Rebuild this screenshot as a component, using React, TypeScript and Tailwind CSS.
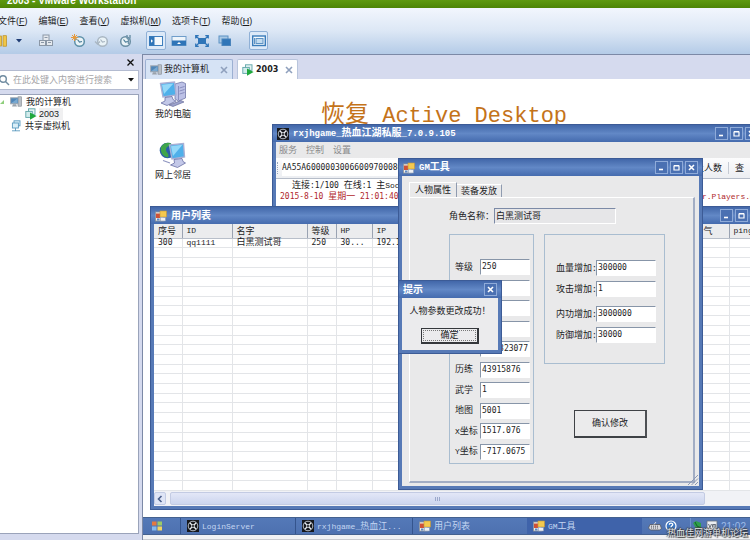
import React from "react";
import { clsx } from "clsx";

function Lat({ children, className }: { children: React.ReactNode; className?: string }) {
  return <span className={clsx("font-['Liberation_Mono','Noto_Sans_CJK_SC',monospace]", className ?? "text-[8px]")}>{children}</span>;
}

function Num({ children }: { children: React.ReactNode }) {
  return <span className="font-['DejaVu_Sans_Mono','Noto_Sans_CJK_SC',monospace] text-[8px]">{children}</span>;
}

function FormIcon() {
  return (
    <svg viewBox="0 0 12 12" className="size-3 shrink-0" aria-hidden="true">
      <rect x="0.5" y="2" width="8" height="9" fill="#f3f0e6" stroke="#8d939c" strokeWidth="0.8" />
      <rect x="1" y="3.5" width="4" height="4.500" fill="#cf5138" />
      <rect x="5" y="1" width="6.500" height="6" fill="#f4c94f" stroke="#c3973a" strokeWidth="0.6" />
      <rect x="5.500" y="7.500" width="5" height="3.500" fill="#eef0f4" stroke="#8b9bb5" strokeWidth="0.6" />
      <rect x="2" y="8.500" width="2.500" height="2" fill="#5d88c8" />
    </svg>
  );
}

function ReelIcon() {
  return (
    <svg viewBox="0 0 12 12" className="size-3 shrink-0" aria-hidden="true">
      <rect width="12" height="12" fill="#16181c" />
      <circle cx="6" cy="6" r="4.8" fill="none" stroke="#c3cad2" strokeWidth="0.9" />
      <path d="M2.8 2.8 9.2 9.2M9.2 2.8 2.8 9.2" stroke="#e8ecf0" strokeWidth="1.300" />
      <circle cx="6" cy="6" r="1.500" fill="#16181c" stroke="#e8ecf0" strokeWidth="0.7" />
    </svg>
  );
}

function PcIcon() {
  return (
    <svg viewBox="0 0 12 12" className="size-3 shrink-0" aria-hidden="true">
      <rect x="8" y="0.8" width="3.5" height="9.4" fill="#b9bfc6" stroke="#7f868e" strokeWidth="0.6" />
      <rect x="0.6" y="1.8" width="7.8" height="6" fill="#4f86b8" stroke="#a4abb3" strokeWidth="1" />
      <path d="M1.5 7 7.5 2.5V7z" fill="#79a9d1" />
      <path d="M3 8.3h3l1 2.2H2z" fill="#9aa2ab" />
    </svg>
  );
}

function VmIcon() {
  return (
    <svg viewBox="0 0 12 12" className="size-3 shrink-0" aria-hidden="true">
      <rect x="3.5" y="0.8" width="6.5" height="5.5" fill="#e3f3f2" stroke="#5fa5a8" strokeWidth="0.9" />
      <rect x="0.8" y="3.4" width="6.5" height="6" fill="#d2ecec" stroke="#5fa5a8" strokeWidth="0.9" />
      <path d="M5 4.4 11.6 8 5 11.8z" fill="#1fa83c" />
    </svg>
  );
}

function SharedIcon() {
  return (
    <svg viewBox="0 0 12 12" className="size-3 shrink-0" fill="#d9eef7" stroke="#5b9bc0" strokeWidth="0.9" aria-hidden="true">
      <rect x="4" y="0.8" width="6" height="5" />
      <rect x="2.4" y="3" width="6" height="5" />
      <path d="M5.5 8v3M2 10.8h8" />
    </svg>
  );
}

function TowerPc() {
  return (
    <svg viewBox="0 0 27 26" className="h-[26px] w-[27px]" aria-hidden="true">
      <path d="M16 3l7-2 3.500 1.500V17l-7 3-3.500-2z" fill="#bcc1e6" stroke="#7278a8" strokeWidth="0.8" />
      <path d="M19.500 5v14M20.500 7l5-1.500M20.500 10l5-1.500M20.500 13l5-1.500" stroke="#7c82b4" strokeWidth="0.8" />
      <path d="M1.500 2.500 15.500 1l1.500 13L4 16z" fill="#4fb0ea" stroke="#a9afd4" strokeWidth="1.400" />
      <path d="M3 3.700 14.500 2.400 5 13z" fill="#94d8f8" />
      <path d="M6 16.500l7-1 1 3 3 1.500-9 4.500-6-2.500 4-2z" fill="#c3c8e8" stroke="#6a70a4" strokeWidth="0.8" />
      <path d="M10 24l12-4.500 3 1.500-11 4.500z" fill="#9da3cc" stroke="#5a6090" strokeWidth="0.6" />
    </svg>
  );
}

function GlobePc() {
  return (
    <svg viewBox="0 0 27 26" className="h-[26px] w-[27px]" aria-hidden="true">
      <circle cx="8.500" cy="8.500" r="7.800" fill="#2a5fa8" />
      <path d="M2 5c3-5 9-4.500 10-3.500 0 3-5 2.500-5 6s4 4 2 8c-5-1-8-5-7-10.500z" fill="#3fa54a" />
      <path d="M10.500 3 24.500 1.500 25.500 15 13 17z" fill="#4fb0ea" stroke="#a9afd4" strokeWidth="1.400" />
      <path d="M12 4.200 23.500 2.800 14 14z" fill="#94d8f8" />
      <path d="M15 17.500l8-1 1 3 2.500 1.500-8 4.500-7-2.500 4-2z" fill="#c3c8e8" stroke="#6a70a4" strokeWidth="0.8" />
      <path d="M4 18.500l7 2.500" stroke="#8f95c0" strokeWidth="1.200" />
    </svg>
  );
}

function WinButton({ kind }: { kind: "min" | "max" | "close" }) {
  const name = { min: "最小化", max: "最大化", close: "关闭" }[kind];
  return (
    <button aria-label={name} className="flex size-[13px] items-center justify-center border border-[#8fabd9] bg-[#4a70b2]">
      <svg viewBox="0 0 9 9" className="size-[9px]" stroke="#fff" fill="none" aria-hidden="true">
        {kind === "min" && <path d="M2 6.500h4" strokeWidth="1.600" />}
        {kind === "max" && <path d="M2 3h5v4H2zM2 2.500h5" strokeWidth="1.200" />}
        {kind === "close" && <path d="M2 2l5 5M7 2 2 7" strokeWidth="1.600" />}
      </svg>
    </button>
  );
}

function Win({ className, title, icon, buttons, children }: {
  className: string; title: React.ReactNode; icon?: React.ReactNode; buttons: ("min" | "max" | "close")[]; children: React.ReactNode;
}) {
  return (
    <section className={clsx("absolute flex flex-col border border-[#3c5b96] bg-[#5679b6]", className)}>
      <header className="flex h-[17px] shrink-0 items-center gap-1 bg-linear-to-b from-[#4267a9] via-[#6288c6] to-[#456bae] px-1 text-[10px] leading-[16px] font-bold text-white">
        {icon}
        <h2 className="whitespace-nowrap">{title}</h2>
        <div className="ml-auto flex gap-[2px]">{buttons.map((b) => <WinButton key={b} kind={b} />)}</div>
      </header>
      <div className="mx-[3px] mb-[3px] flex min-h-0 flex-1 flex-col bg-[#e9e9ea]">{children}</div>
    </section>
  );
}

const digits = "font-['DejaVu_Sans_Mono','Noto_Sans_CJK_SC',monospace] text-[8px]";

const sunken =
  "h-4 min-w-0 border border-t-[#8795a8] border-l-[#8795a8] border-r-white border-b-white bg-white px-px pb-px leading-[12px] text-[#222] outline-none";

const stats: [string, string][] = [
  ["等级", "250"], ["", ""], ["", ""], ["", ""], ["", "323077"],
  ["历练", "43915876"], ["武学", "1"], ["地图", "5001"], ["X坐标", "1517.076"], ["Y坐标", "-717.0675"],
];

function Bonus({ id, label, value }: { id: string; label: string; value: string }) {
  return (
    <div className="flex items-center">
      <label htmlFor={id} className="w-10 leading-[13px] whitespace-nowrap">{label}<Num>:</Num></label>
      <input id={id} defaultValue={value} className={clsx(sunken, digits, "w-[60px]")} />
    </div>
  );
}

function GmWindow() {
  return (
    <Win className="top-[79px] left-[255px] h-[332px] w-[305px]" icon={<FormIcon />} title={<><Lat className="text-[9px]">GM</Lat>工具</>} buttons={["min", "max", "close"]}>
      <div className="flex min-h-0 flex-1 flex-col pt-[6px] pr-[4px] pb-[3px] pl-[7px]">
        <div role="tablist" className="flex items-end">
          <button role="tab" aria-selected="true" className="h-[15px] w-12 border-t border-r border-l border-t-white border-r-[#8f9bb0] border-l-white leading-[12px] whitespace-nowrap">人物属性</button>
          <button role="tab" aria-selected="false" className="h-[13px] w-[45px] border-t border-r border-t-white border-r-[#8f9bb0] leading-[12px] whitespace-nowrap">装备发放</button>
        </div>
        <div className="flex min-h-0 flex-1 flex-col border-t border-r-2 border-b-2 border-l border-t-white border-r-[#a2adc4] border-b-[#a2adc4] border-l-white pt-[10px] pl-[39px]">
          <div className="flex items-center gap-px">
            <label htmlFor="role" className="w-[44px] whitespace-nowrap">角色名称：</label>
            <input id="role" readOnly defaultValue="白黑测试哥" className="h-4 w-[122px] border border-t-[#7c8aa6] border-r-white border-b-white border-l-[#7c8aa6] bg-[#e6e6e8] px-px pb-px text-[9px] leading-[13px] outline-none" />
          </div>
          <div className="mt-[10px] flex items-start gap-[10px]">
            <fieldset className="flex h-[230px] w-[84px] flex-col justify-between border border-[#a9bdd0] pt-[24px] pr-[3px] pb-[3px] pl-[5px]">
              {stats.map(([label, value], i) => (
                <div key={i} className="flex items-center">
                  <label htmlFor={"stat" + i} className="w-[25px] shrink-0 leading-[13px] whitespace-nowrap">
                    {label.endsWith("坐标") ? <><Lat>{label[0]}</Lat>坐标</> : label}
                  </label>
                  <input id={"stat" + i} defaultValue={value} className={clsx(sunken, digits, "w-[50px]", i === 4 && "text-right")} />
                </div>
              ))}
            </fieldset>
            <div className="flex flex-col">
              <fieldset className="flex h-[130px] w-[121px] flex-col gap-[9px] border border-[#a9bdd0] pt-[25px] pl-[11px]">
                <div className="flex flex-col gap-[5px]">
                  <Bonus id="hp" label="血量增加" value="300000" />
                  <Bonus id="atk" label="攻击增加" value="1" />
                </div>
                <div className="flex flex-col gap-[5px]">
                  <Bonus id="mp" label="内功增加" value="3000000" />
                  <Bonus id="def" label="防御增加" value="30000" />
                </div>
              </fieldset>
              <button className="mt-[46px] ml-[30px] h-[28px] w-[73px] border border-r-2 border-b-2 border-[#3f4246] border-r-[#4d5054] bg-[#ebebec] outline-none">确认修改</button>
            </div>
          </div>
        </div>
      </div>
      <svg viewBox="0 0 12 12" className="absolute right-[3px] bottom-[3px] size-3" stroke="#8b98b4" aria-hidden="true">
        <path d="M1 11 11 1M4.500 11 11 4.500M8 11l3-3" />
      </svg>
    </Win>
  );
}

const cols: [string, string][] = [
  ["序号", "w-[28px]"], ["ID", "w-[50px]"], ["名字", "w-[75px]"], ["等级", "w-[29px]"], ["HP", "w-[36px]"], ["IP", "w-[86px]"],
  ["", "w-[32px]"], ["", "w-[46px]"], ["", "w-[46px]"], ["", "w-[28px]"], ["", "w-[31px]"], ["", "w-[28px]"], ["气", "w-[60px]"], ["ping", ""],
];
const user = ["300", "qq1111", "白黑测试哥", "250", "30...", "192.168.1.2"];

function UserList() {
  return (
    <Win className="top-[127px] left-[7px] h-[304px] w-[618px]" icon={<FormIcon />} title="用户列表" buttons={["min", "max", "close"]}>
      <div className="min-h-0 flex-1 overflow-hidden bg-white">
        <table className="h-full w-full table-fixed border-collapse">
          <thead>
            <tr className="h-[14px] bg-[#ebecee]">
              {cols.map(([c, w], i) => (
                <th key={i} className={clsx("border-r border-b border-r-[#9aa3b2] border-b-[#b8bfca] p-0 pl-1 text-left leading-[12px] font-normal whitespace-nowrap", w, i === 12 && "pr-4 text-right")}>
                  {/^[A-Za-z]/.test(c) ? <Lat>{c}</Lat> : c}
                </th>
              ))}
            </tr>
          </thead>
          <tbody>
            {Array.from({ length: 26 }, (_, r) => (
              <tr key={r}>
                {cols.map((_, i) => (
                  <td key={i} className="border-r border-b border-[#e3e5e8] p-0 pl-1 whitespace-nowrap">
                    <div className={clsx("flex h-2 items-center", i === 2 ? "" : i === 1 ? "font-['Liberation_Mono',monospace] text-[8px]" : digits)}>
                      {r === 0 ? user[i] : null}
                    </div>
                  </td>
                ))}
              </tr>
            ))}
          </tbody>
        </table>
      </div>
      <div className="flex h-[15px] shrink-0 items-center gap-1 bg-[#f1f2f6] py-px">
        <button aria-label="向左滚动" className="flex h-[13px] w-[12px] items-center justify-center rounded-xs border border-[#c3cce4] bg-[#dfe5f6]">
          <svg viewBox="0 0 6 8" className="h-2 w-[6px]" fill="none" stroke="#4a5f8a" strokeWidth="1.600" aria-hidden="true"><path d="M4.500 1 1.500 4l3 3" /></svg>
        </button>
        <div className="flex h-[13px] w-[535px] items-center justify-center gap-px rounded-xs border border-[#c3cbe3] bg-linear-to-b from-[#e3e7f7] to-[#ccd5ee]">
          <i className="h-1 w-px bg-[#9ba8cb]" /><i className="h-1 w-px bg-[#9ba8cb]" /><i className="h-1 w-px bg-[#9ba8cb]" />
        </div>
      </div>
    </Win>
  );
}

function ServerWindow() {
  return (
    <Win className="top-[45px] left-[129px] h-[100px] w-[491px]" icon={<ReelIcon />} title={<><Lat className="text-[9px]">rxjhgame_</Lat>热血江湖私服<Lat className="text-[9px]">_7.0.9.105</Lat></>} buttons={["min", "max", "close"]}>
      <nav className="flex h-4 shrink-0 items-center gap-[9px] px-[3px] text-[#8a8a8a]">
        <button>服务</button><button>控制</button><button>设置</button>
      </nav>
      <div className="flex h-[21px] shrink-0 items-center border-b border-[#b6bdc9] bg-linear-to-b from-[#fcfcfd] to-[#eceef2] pr-[15px]">
        <i className="mr-1 ml-px h-3 border-l border-dotted border-[#9aa6bb]" />
        <input aria-label="封包" defaultValue="AA55A6000003006600970008CD" className="h-4 w-[150px] bg-white pb-px font-['DejaVu_Sans_Mono',monospace] text-[8px] outline-none" />
        <div className="ml-auto flex items-center gap-[6px] whitespace-nowrap">
          <button>线上人数</button>
          <i className="h-3 w-px bg-[#c5cad3]" />
          <button>查</button>
        </div>
      </div>
      <div className="flex-1 bg-white px-1 pt-px leading-[11px] whitespace-nowrap">
        <p className="pl-3">连接<Num>:1/100 </Num>在线<Num>:1 </Num>主<Lat>Socket</Lat></p>
        <p className="flex text-[#b01f2c]">
          <span><Num>2015-8-10 </Num>星期一<Num> 21:01:40</Num></span>
          <Lat className="ml-auto w-[53px] text-[8px]">r.Players.m</Lat>
        </p>
      </div>
    </Win>
  );
}

function TipDialog() {
  return (
    <Win className="top-[201px] left-[255px] h-[74px] w-[104px]" title="提示" buttons={["close"]}>
      <div role="dialog" aria-label="提示" className="flex flex-1 flex-col items-center bg-[#ebebed] pt-[7px]">
        <p className="leading-[13px] whitespace-nowrap">人物参数更改成功！</p>
        <button className="mt-[10px] h-4 w-[58px] border border-r-2 border-b-2 border-[#34373b] p-px">
          <span className="block h-full border border-dotted border-[#777] leading-[9px]">确定</span>
        </button>
      </div>
    </Win>
  );
}

function Task({ icon, children, className }: { icon: React.ReactNode; children: React.ReactNode; className: string }) {
  return (
    <button className={clsx("flex h-full shrink-0 items-center gap-[3px] pl-[6px] whitespace-nowrap text-[#c3d5f2]", className)}>
      {icon}<span>{children}</span>
    </button>
  );
}

function Taskbar() {
  return (
    <footer className="flex h-[18px] shrink-0 items-center border-t border-b border-[#44618f] bg-linear-to-b from-[#5479b8] to-[#4d71b0]">
      <button aria-label="开始" className="flex w-[37px] shrink-0 pl-2">
        <svg viewBox="0 0 12 12" className="size-3" aria-hidden="true">
          <rect x="1" y="1.500" width="4.500" height="4" fill="#e4793f" /><rect x="6.500" y="1.500" width="4.500" height="4" fill="#9ccb67" />
          <rect x="1" y="6.500" width="4.500" height="4" fill="#84b8ee" /><rect x="6.500" y="6.500" width="4.500" height="4" fill="#f3d560" />
        </svg>
      </button>
      <Task icon={<ReelIcon />} className="w-[115px] border-l border-[#34548d]"><Lat>LoginServer</Lat></Task>
      <Task icon={<ReelIcon />} className="w-[117px] border-l border-[#34548d]"><Lat>rxjhgame_</Lat>热血江<Lat>...</Lat></Task>
      <Task icon={<FormIcon />} className="w-[115px] border-l border-[#34548d]">用户列表</Task>
      <Task icon={<FormIcon />} className="w-[115px] bg-[#3f63aa]"><Lat>GM</Lat>工具</Task>
      <div className="flex items-center pl-[6px]">
        <svg viewBox="0 0 14 12" className="h-3 w-[14px]" aria-hidden="true">
          <path d="M2 4.500h10l1.500 4-2 1.500h-9L.5 8z" fill="#d7d9de" stroke="#54575e" strokeWidth="0.8" />
          <path d="M3 6.200h8M3 8h8" stroke="#55585e" strokeDasharray="1 1" /><path d="M6 4.500 8 2" stroke="#ddd" />
        </svg>
        <svg viewBox="0 0 12 12" className="ml-[3px] size-3" fill="none" aria-hidden="true">
          <circle cx="6" cy="6" r="5" fill="#3d77c2" stroke="#fff" strokeWidth="1.200" />
          <path d="M4.300 4.800C4.300 2.500 7.800 2.600 7.700 4.600 7.600 5.800 6 5.900 6 7.300M6 8.300v1.200" stroke="#fff" strokeWidth="1.300" />
        </svg>
      </div>
      <div className="ml-auto flex h-full shrink-0 items-center gap-[3px] border-l border-[#6f92cc] pr-1">
        <svg viewBox="0 0 12 12" className="size-3" aria-hidden="true"><path d="M2 3l3-2 5 2v5L6 10z" fill="#2f9f4c" /><path d="M4 2l2 4 4 2" stroke="#12612a" fill="none" /></svg>
        <svg viewBox="0 0 12 12" className="size-3" aria-hidden="true">
          <rect x="1" y="1" width="10" height="9" fill="#eceef2" stroke="#6c737e" strokeWidth="0.8" />
          <path d="M2.500 4 4 7.500 5.500 4M6.500 7.500V4.500h3.200v3M8 4.500v3" fill="none" stroke="#59606b" strokeWidth="0.9" />
        </svg>
        <time className="font-['Liberation_Sans',sans-serif] text-[10px] text-[#9dbbe8]">21:02</time>
      </div>
    </footer>
  );
}

const menus = [["文件", "F"], ["编辑", "E"], ["查看", "V"], ["虚拟机", "M"], ["选项卡", "T"], ["帮助", "H"]];

function Sep() {
  return <i className="h-[14px] w-px bg-[#98b0cf]" />;
}

function Toolbar() {
  return (
    <div className="flex h-[21px] items-center">
      <button aria-label="挂起" className="flex w-7 items-center gap-2">
        <svg viewBox="0 0 8 12" className="h-3 w-2" aria-hidden="true"><rect x="-1" y="1" width="2.500" height="10" fill="#f0c648" stroke="#b98d24" strokeWidth="0.7" /><rect x="3" y="0.700" width="3.500" height="10.500" fill="#f0c648" stroke="#b98d24" strokeWidth="0.7" /></svg>
        <svg viewBox="0 0 6 4" className="h-1 w-[6px]" aria-hidden="true"><path d="M0 0h6L3 3.500z" fill="#1f3c74" /></svg>
      </button>
      <div className="ml-[2px]"><Sep /></div>
      <button aria-label="发送" className="ml-2">
        <svg viewBox="0 0 16 14" className="h-[14px] w-4" fill="#e5e9ee" stroke="#8b97a6" aria-hidden="true"><rect x="5" y="1" width="6" height="5.500" /><rect x="1.500" y="6.500" width="6" height="5" /><rect x="8.500" y="6.500" width="6" height="5" /><path d="M3 8.500h3M10 8.500h3M6.500 3.500h3" /></svg>
      </button>
      <div className="ml-2"><Sep /></div>
      <div className="ml-[9px] flex gap-2">
        {[0, 1, 2].map((k) => (
          <button key={k} aria-label={["拍摄快照", "恢复快照", "管理快照"][k]}>
            <svg viewBox="0 0 15 14" className="h-[14px] w-[15px]" fill="none" aria-hidden="true">
              <circle cx="8.500" cy="7.500" r="4.800" fill="#eaf3f7" stroke={["#5e90a8", "#a9b6c2", "#6b8fa4"][k]} strokeWidth="1.500" />
              <path d="M6.500 5.500 8.500 8l2.500-.5" stroke={["#4b7d98", "#a9b6c2", "#4b7d98"][k]} strokeWidth="1.200" />
              {k === 0 && <path d="M3.500 0v7M0 3.500h7M1 1l5 5M6 1 1 6" stroke="#e79a3a" />}
              {k === 1 && <path d="M1 7.500 3.500 10 6 7.500" stroke="#a9b6c2" strokeWidth="1.300" />}
              {k === 2 && <path d="M10 1v3l1.500 1.500L13 4V1M11.500 5.500V10" stroke="#6f94aa" strokeWidth="1.500" />}
            </svg>
          </button>
        ))}
      </div>
      <div className="ml-2"><Sep /></div>
      <button aria-label="显示库" className="ml-[6px] flex h-[19px] w-5 items-center justify-center rounded-xs border border-[#8fb0d6] bg-[#dce9f8]">
        <svg viewBox="0 0 14 12" className="h-3 w-[14px]" aria-hidden="true"><rect x="0.500" y="1.500" width="13" height="9" fill="#f4f9fd" stroke="#3f7fbd" /><rect x="0.500" y="1.500" width="5" height="9" fill="#2f75b8" /><path d="M2 4.200 4 6 2 7.800z" fill="#fff" /></svg>
      </button>
      <button aria-label="缩略图栏" className="ml-[5px]">
        <svg viewBox="0 0 16 12" className="h-3 w-4" aria-hidden="true"><rect x="1" y="1.500" width="14" height="9" fill="#eef5fb" stroke="#6f9dca" /><rect x="1" y="5.500" width="14" height="5" fill="#2f75b8" /><path d="M6 9h4L8 7z" fill="#fff" /></svg>
      </button>
      <button aria-label="全屏" className="ml-2">
        <svg viewBox="0 0 14 12" className="h-3 w-[14px]" aria-hidden="true"><rect x="3" y="3" width="8" height="6" fill="#2f75b8" /><path d="M.7 3.500V.7h3M10.300.7h3v2.800M13.300 8.500v2.800h-3M3.700 11.300h-3V8.500M1 1l2.500 2.500M13 1l-2.500 2.500M1 11l2.500-2.500M13 11l-2.500-2.500" fill="none" stroke="#2f75b8" strokeWidth="1.200" /></svg>
      </button>
      <button aria-label="Unity" className="ml-[9px]">
        <svg viewBox="0 0 14 12" className="h-3 w-[14px]" aria-hidden="true"><rect x="1" y="1" width="9" height="7" fill="#a9c8e4" stroke="#5c92c4" /><rect x="4" y="4" width="8.500" height="6.500" fill="#2f75b8" stroke="#4a84bc" /></svg>
      </button>
      <div className="ml-[9px]"><Sep /></div>
      <button aria-label="控制台视图" className="ml-[8px] flex h-[19px] w-[19px] items-center justify-center rounded-xs border border-[#8fb0d6] bg-[#dce9f8]">
        <svg viewBox="0 0 14 12" className="h-3 w-[14px]" aria-hidden="true"><rect x="0.700" y="1" width="12.600" height="9.500" fill="#f4f9fd" stroke="#3a7cba" strokeWidth="1.400" /><rect x="4" y="3.500" width="7" height="5" fill="#c3dcf0" stroke="#5c92c4" /><path d="M2.500 3v6" stroke="#5c92c4" /></svg>
      </button>
    </div>
  );
}

function TabClose() {
  return (
    <button aria-label="关闭标签">
      <svg viewBox="0 0 8 8" className="size-2" stroke="#8fa0bd" strokeWidth="1.600" aria-hidden="true"><path d="M1 1l6 6M7 1 1 7" /></svg>
    </button>
  );
}

export default function App() {
  return (
    <div className="relative flex h-screen flex-col overflow-hidden bg-[#d5daee] font-['Liberation_Sans','Noto_Sans_CJK_SC',sans-serif] text-[9px] leading-[13px] text-[#1c1c1e]">
      <div className="flex h-2 shrink-0 items-end overflow-hidden bg-linear-to-b from-[#5f9a10] to-[#4d8506] pb-[2px] pl-[7px]">
        <h1 className="text-[10px] leading-[10px] font-bold whitespace-nowrap text-white">2003 - VMware Workstation</h1>
      </div>
      <header className="flex h-[46px] shrink-0 flex-col bg-linear-to-b from-[#f2f6fd] via-[#dce7f5] to-[#b4cbe7] pt-[5px]">
        <nav className="-ml-[2px] flex h-[17px] shrink-0 gap-[11px] whitespace-nowrap">
          {menus.map(([m, k]) => (
            <button key={k} className="leading-[13px]">{m}(<u>{k}</u>)</button>
          ))}
        </nav>
        <Toolbar />
      </header>

      <div className="flex min-h-0 flex-1">
        <aside className="flex w-[142px] shrink-0 flex-col pr-[3px] pb-[6px]">
          <div className="flex h-4 shrink-0 items-center justify-end pr-[5px]">
            <button aria-label="关闭库">
              <svg viewBox="0 0 7 7" className="size-[7px]" stroke="#111" strokeWidth="1.300" aria-hidden="true"><path d="M.5.5l6 6M6.500.5l-6 6" /></svg>
            </button>
          </div>
          <div className="flex h-5 shrink-0 items-center border border-l-0 border-[#b3bbd0] bg-white pr-1">
            <svg viewBox="0 0 10 12" className="h-3 w-[10px] shrink-0" fill="none" stroke="#6f8ba0" strokeWidth="1.400" aria-hidden="true"><circle cx="3" cy="5" r="3.300" /><path d="M5.500 7.500 9 11" /></svg>
            <input aria-label="搜索" placeholder="在此处键入内容进行搜索" className="min-w-0 flex-1 pl-[3px] text-[9px] outline-none placeholder:text-[#a5a5a8]" />
            <svg viewBox="0 0 6 4" className="h-1 w-[6px]" aria-hidden="true"><path d="M0 0h6L3 3.500z" fill="#111" /></svg>
          </div>
          <ul className="mt-1 min-h-0 flex-1 border-t border-r border-b border-[#9aa3ba] bg-white leading-[12px]">
            <li className="mt-px flex items-center gap-1">
              <svg viewBox="0 0 6 6" className="size-[6px]" aria-hidden="true"><path d="M0 5 4 1v4z" fill="#8fcf7c" /></svg>
              <PcIcon />我的计算机
            </li>
            <li className="flex items-center gap-[2px] pl-[25px]"><VmIcon /><span className="bg-[#f0f0f1] pr-1">2003</span></li>
            <li className="flex items-center gap-[3px] pl-[10px]"><SharedIcon />共享虚拟机</li>
          </ul>
        </aside>

        <main className="flex min-w-0 flex-1 flex-col border-t border-l border-[#7c89a6]">
          <div role="tablist" className="flex h-6 shrink-0 items-end gap-1 pl-[2px]">
            <div className="flex h-5 w-[88px] items-center gap-[2px] rounded-t-xs border border-b-0 border-[#9cb0d2] bg-[#d6e3f5] px-1">
              <PcIcon /><button role="tab" aria-selected="false" className="mr-auto whitespace-nowrap">我的计算机</button><TabClose />
            </div>
            <div className="flex h-5 w-[61px] items-center gap-[2px] rounded-t-xs border border-b-0 border-[#b9c5dc] bg-white px-1">
              <VmIcon /><button role="tab" aria-selected="true" className="mr-auto font-['DejaVu_Sans',sans-serif] text-[8px] font-bold">2003</button><TabClose />
            </div>
          </div>
          <div className="relative min-h-0 flex-1 overflow-hidden bg-white">
            <div className="flex w-[60px] flex-col items-center text-center">
              <div className="mt-[2px] flex flex-col items-center gap-px"><TowerPc />我的电脑</div>
              <div className="mt-[21px] flex flex-col items-center gap-px"><GlobePc />网上邻居</div>
            </div>
            <p className="absolute top-[21px] left-[178px] text-[24px] leading-[28px] whitespace-nowrap text-[#c4731a]">恢复<Lat className="text-[22px]"> Active Desktop</Lat></p>
            <ServerWindow />
            <UserList />
            <GmWindow />
            <TipDialog />
          </div>
          <Taskbar />
          <div className="h-[5px] shrink-0 border-b border-[#c9cbd0] bg-[#f1f2f4]" />
        </main>
      </div>
      <p className="absolute right-[2px] bottom-0 leading-[13px] whitespace-nowrap text-[#e4e7ec] [text-shadow:1px_1px_1px_#222,-1px_0_1px_#444,0_-1px_1px_#444]">热血佳网游单机论坛</p>
    </div>
  );
}
